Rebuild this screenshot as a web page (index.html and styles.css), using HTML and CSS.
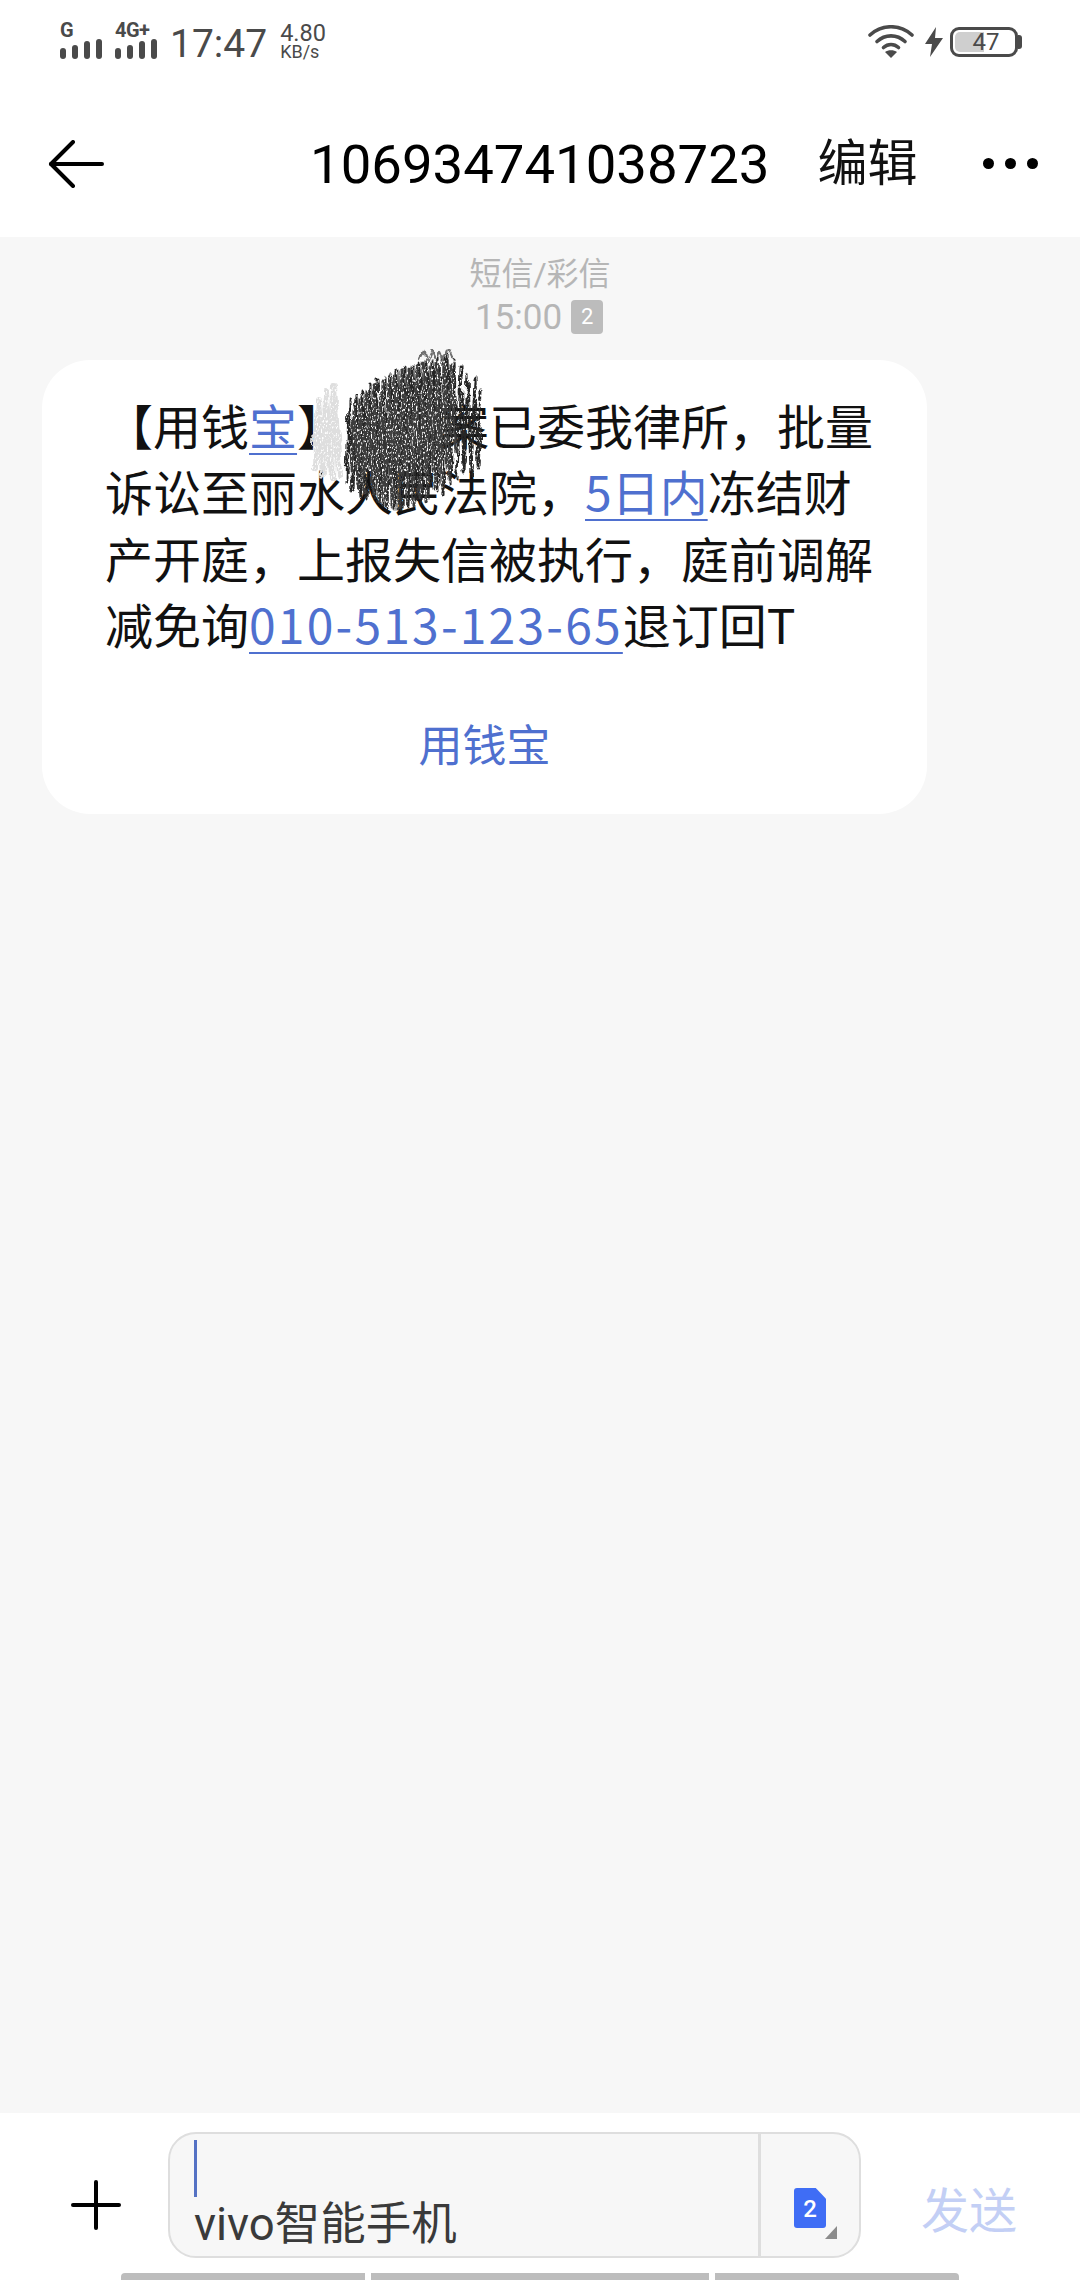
FILE: index.html
```html
<!DOCTYPE html>
<html lang="zh-CN">
<head>
<meta charset="utf-8">
<title>106934741038723</title>
<link rel="stylesheet" href="styles.css">
</head>
<body>
<div class="phone">
  <header class="top">
    <div class="status">
      <div class="status-left">
        <div class="net"><span class="net-label">G</span>
          <svg class="bars" width="42" height="20" viewBox="0 0 42 20"><rect x="0" y="9" width="6" height="11" rx="3"/><rect x="12" y="6" width="6" height="14" rx="3"/><rect x="24" y="2" width="6" height="18" rx="3"/><rect x="36" y="0" width="6" height="20" rx="3"/></svg>
        </div>
        <div class="net"><span class="net-label">4G+</span>
          <svg class="bars" width="42" height="20" viewBox="0 0 42 20"><rect x="0" y="9" width="6" height="11" rx="3"/><rect x="12" y="6" width="6" height="14" rx="3"/><rect x="24" y="2" width="6" height="18" rx="3"/><rect x="36" y="0" width="6" height="20" rx="3"/></svg>
        </div>
        <span class="clock">17:47</span>
        <div class="speed"><span class="speed-num">4.80</span><span class="speed-unit">KB/s</span></div>
      </div>
      <div class="status-right">
        <svg class="wifi" width="46" height="34" viewBox="0 0 46 34" fill="none" stroke="#4a4a4a" stroke-width="3.6" stroke-linecap="round"><path d="M2 10C14 -1 32 -1 44 10"/><path d="M9 16.500C17 9 29 9 37 16.500"/><path d="M15.500 22.500C20 18.500 26 18.500 30.500 22.500"/><path d="M23 33L17 27C20 24.500 26 24.500 29 27Z" fill="#4a4a4a" stroke="none"/></svg>
        <svg class="bolt" width="18" height="30" viewBox="0 0 18 30"><path d="M11 0L0 17H7L5 30L18 11H10Z" fill="#4a4a4a"/></svg>
        <div class="battery"><div class="battery-body"><div class="battery-fill"></div><span class="battery-num">47</span></div><div class="battery-cap"></div></div>
      </div>
    </div>
    <nav class="bar">
      <svg class="back" width="56" height="48" viewBox="0 0 56 48" fill="none" stroke="#000" stroke-width="4" stroke-linecap="round" stroke-linejoin="round"><path d="M25 2L3 24L25 46"/><path d="M3 24H54"/></svg>
      <h1 class="number">106934741038723</h1>
      <span class="edit">编辑</span>
      <div class="more"><i></i><i></i><i></i></div>
    </nav>
  </header>

  <main class="thread">
    <div class="meta">
      <div class="meta-kind">短信/彩信</div>
      <div class="meta-time"><span>15:00</span><span class="sim-badge">2</span></div>
    </div>
    <article class="bubble">
      <p class="body">【用钱<a class="link">宝</a>】　　案已委我律所，批量诉讼至丽水人民法院，<a class="link">5日内</a>冻结财产开庭，上报失信被执行，庭前调解减免询<a class="link phone-link">010-513-123-65</a>退订回T</p>
      <div class="sender">用钱宝</div>
      <svg class="scribble" width="180" height="176" viewBox="0 0 180 176" fill="none" stroke-linecap="round" stroke-linejoin="round">
        <defs>
          <filter id="pencil" x="-10%" y="-10%" width="120%" height="120%">
            <feTurbulence type="fractalNoise" baseFrequency="0.09 0.05" numOctaves="2" seed="11" result="wob"/>
            <feDisplacementMap in="SourceGraphic" in2="wob" scale="9" xChannelSelector="R" yChannelSelector="G" result="d"/>
            <feTurbulence type="fractalNoise" baseFrequency="0.8 0.35" numOctaves="2" seed="4" result="n"/>
            <feColorMatrix in="n" type="matrix" values="0 0 0 0 0 0 0 0 0 0 0 0 0 0 0 5 0 0 0 -1.300" result="g"/>
            <feComposite in="d" in2="g" operator="in"/>
          </filter>
        </defs>
        <rect class="erase" x="6" y="52" width="106" height="68"/>
        <g filter="url(#pencil)">
          <path stroke="#dedede" stroke-width="6" d="M5 118L8 50L13 126L16 42L21 130L24 36L29 126"/>
          <path stroke="#262626" stroke-width="3" d="M37 134L39 52L43 142L46 48L51 148L53 44L56 150L60 34L64 150L66 30L71 156L74 28L77 160L81 24L85 160L88 22L91 162L95 18L98 158L102 16L106 152L109 14L112 156L116 12L119 150L123 10L127 142L129 8L133 146L137 6L140 136L144 10L147 128L151 18L154 122L158 24L161 126L165 30L168 118L172 42"/>
          <path stroke="#3c3c3c" stroke-width="3" d="M41 122L44 60L48 138L50 52L54 144L57 42L62 146L64 36L68 152L71 32L75 156L79 26L82 158L85 26L89 160L92 20L96 156L99 20L103 158L106 16L110 150L113 14L117 152L120 16L124 140L127 12L131 136L134 10L138 130L141 16L146 104"/>
          <path stroke="#707070" stroke-width="2.500" d="M110 10L114 2L118 12L122 0L126 8L130 2L134 10L138 0L142 8"/>
        </g>
      </svg>
    </article>
  </main>

  <footer class="composer">
    <div class="composer-row">
      <svg class="plus" width="50" height="50" viewBox="0 0 50 50" fill="none" stroke="#000" stroke-width="4" stroke-linecap="round"><path d="M25 2V48"/><path d="M2 25H48"/></svg>
      <div class="field">
        <div class="field-main">
          <div class="caret"></div>
          <div class="placeholder">vivo智能手机</div>
        </div>
        <div class="field-sim">
          <div class="sim-icon"><span>2</span></div>
          <div class="sim-corner"></div>
        </div>
      </div>
      <span class="send">发送</span>
    </div>
    <div class="keys"><div class="key key-first"></div><div class="key key-mid"></div><div class="key key-last"></div></div>
  </footer>
</div>
</body>
</html>
```

FILE: styles.css
```css
* { box-sizing: border-box; }
html, body { margin: 0; padding: 0; }
body { width: 1080px; height: 2280px; overflow: hidden; background: #f7f7f7; font-family: Roboto, "Noto Sans CJK SC", sans-serif; text-spacing-trim: space-all; }
.phone { width: 1080px; height: 2280px; display: flex; flex-direction: column; }

.top { height: 237px; background: #fff; flex: none; }
.status { height: 90px; padding: 20px 58px 0 60px; display: flex; justify-content: space-between; align-items: flex-start; }
.status-left { display: flex; align-items: flex-start; }
.net { width: 55px; display: flex; flex-direction: column; }
.net + .net { width: 48px; }
.net-label { font-size: 20px; line-height: 20px; height: 19px; font-weight: 700; color: #4a4a4a; letter-spacing: -0.500px; }
.bars { fill: #4a4a4a; display: block; }
.clock { font-size: 39px; line-height: 46px; color: #4a4a4a; margin-left: 7px; margin-top: 1px; }
.speed { display: flex; flex-direction: column; margin-left: 13px; margin-top: 3px; color: #4a4a4a; }
.speed-num { font-size: 23.500px; line-height: 20px; }
.speed-unit { font-size: 18px; line-height: 18px; }
.status-right { display: flex; align-items: flex-start; }
.wifi { margin-top: 5px; }
.bolt { margin: 7px 7px 0 11px; }
.battery { display: flex; align-items: center; margin-top: 7px; }
.battery-body { position: relative; width: 68px; height: 30px; border: 3px solid #4a4a4a; border-radius: 9px; display: flex; align-items: center; justify-content: center; }
.battery-fill { position: absolute; left: 2px; top: 2px; bottom: 2px; width: 47%; background: #cfcfcf; border-radius: 5px 0 0 5px; }
.battery-num { position: relative; font-size: 24px; line-height: 24px; color: #4a4a4a; margin-left: 4px; }
.battery-cap { width: 4px; height: 14px; background: #4a4a4a; border-radius: 0 3px 3px 0; }

.bar { height: 147px; padding: 0 40px 0 48px; display: flex; align-items: center; }
.back { flex: none; }
.number { margin: 0 0 0 206px; font-size: 54.500px; font-weight: 400; line-height: 64px; color: #000; white-space: nowrap; }
.edit { margin-left: 48px; font-size: 50px; line-height: 64px; color: #111; }
.more { margin-left: auto; margin-right: 2px; display: flex; gap: 11px; }
.more i { width: 11px; height: 11px; background: #000; border-radius: 50%; display: block; }

.thread { flex: 1; padding: 0 0 0 42px; }
.meta { margin: 14px 0 0 -42px; text-align: center; color: #b6b6b6; }
.meta-kind { font-size: 32px; line-height: 46px; }
.meta-time { font-size: 35px; line-height: 42px; display: flex; justify-content: center; align-items: center; gap: 9px; margin-left: -2px; }
.sim-badge { width: 32px; height: 34px; background: #bcbcbc; border-radius: 4px; font-size: 22px; line-height: 34px; color: #fff; text-align: center; margin-top: -3px; }

.bubble { position: relative; width: 885px; height: 454px; margin-top: 21px; padding: 31px 41px 0 63px; background: #fff; border-radius: 48px; }
.body { margin: 0; font-size: 48px; line-height: 66.400px; color: #111; font-family: "Noto Sans CJK SC", sans-serif; word-break: break-all; }
.link { color: #4f70cf; text-decoration: underline; text-decoration-thickness: 2px; text-underline-offset: 8px; }
.phone-link { letter-spacing: 2.200px; }
.sender { margin-top: 60px; margin-left: -22px; text-align: center; font-size: 44px; line-height: 60px; color: #4f70cf; }
.scribble { position: absolute; left: 268px; top: -11px; }
.erase { fill: #fff; fill-opacity: 0.9; stroke: none; }

.composer { height: 167px; background: #fff; flex: none; display: flex; flex-direction: column; }
.composer-row { height: 160px; display: flex; align-items: flex-start; padding-top: 19px; }
.plus { margin: 48px 0 0 71px; flex: none; }
.field { width: 693px; height: 126px; margin-left: 47px; background: #f7f7f7; border: 2px solid #dedede; border-radius: 28px; display: flex; }
.field-main { width: 591px; padding: 6px 0 0 24px; border-right: 3px solid #dedede; }
.caret { width: 3px; height: 57px; background: #5572c4; }
.placeholder { margin-top: 2px; font-size: 45.500px; line-height: 52px; color: #3a3a3a; }
.field-sim { position: relative; flex: 1; }
.sim-icon { position: absolute; left: 33px; top: 54px; width: 32px; height: 40px; background: #3f6df5; border-radius: 3px; clip-path: polygon(0 0, 68% 0, 100% 27%, 100% 100%, 0 100%); font-size: 24px; font-weight: 500; line-height: 42px; color: #fff; text-align: center; }
.sim-corner { position: absolute; left: 64px; top: 92px; width: 12px; height: 13px; background: #8c8c8c; clip-path: polygon(100% 0, 100% 100%, 0 100%); }
.send { margin: 53px 0 0 60px; font-size: 48px; line-height: 54px; color: #c3cff5; }
.keys { display: flex; gap: 6px; padding-left: 121px; height: 7px; }
.key { height: 7px; background: #bdbdbd; }
.key-first { width: 244px; border-radius: 4px 0 0 0; }
.key-mid { width: 338px; }
.key-last { width: 244px; border-radius: 0 4px 0 0; }
```
